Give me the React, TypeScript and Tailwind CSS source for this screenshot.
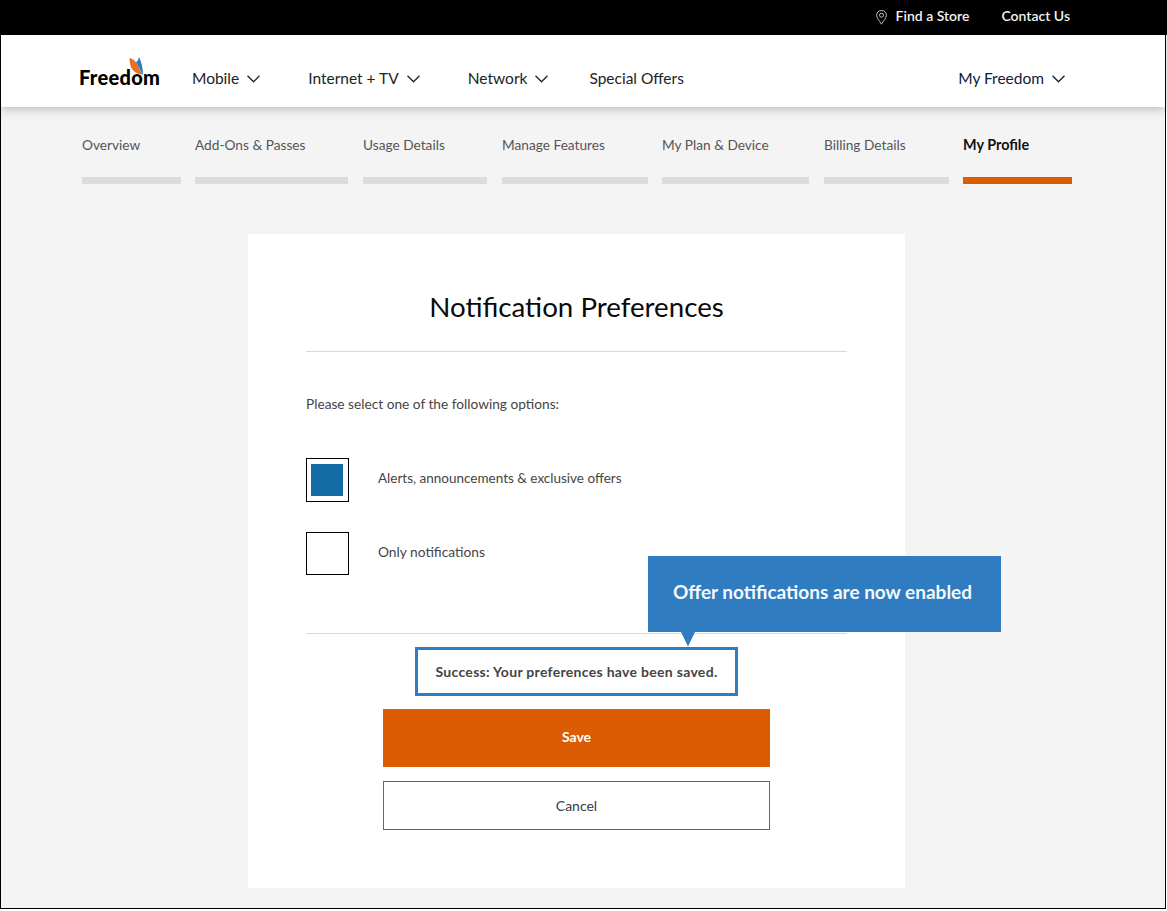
const tabs = [
  { label: "Overview", width: "w-[99px] mr-[14px]" },
  { label: "Add-Ons & Passes", width: "w-[153px] mr-[15px]" },
  { label: "Usage Details", width: "w-[124px] mr-[15px]" },
  { label: "Manage Features", width: "w-[146px] mr-[14px]" },
  { label: "My Plan & Device", width: "w-[147px] mr-[15px]" },
  { label: "Billing Details", width: "w-[125px] mr-[14px]" },
];

function Chevron() {
  return (
    <svg width="13" height="8" viewBox="0 0 13 8" fill="none" stroke="currentColor" strokeWidth="1.3">
      <path d="M0.5 0.8 L6.5 6.8 L12.5 0.8" />
    </svg>
  );
}

function NavItem({ label, className }: { label: string; className: string }) {
  return (
    <a className={`flex items-center gap-[8px] text-[15.5px] ${className}`}>
      {label}
      <Chevron />
    </a>
  );
}

function Logo() {
  return (
    <div className="relative w-[81px] h-[28px] mt-[-14px]">
      <svg className="absolute left-[49px] top-[-1px]" width="15" height="18" viewBox="0 0 15 18">
        <path d="M0.5 1 C5 2 8 5 13 17.5 C6 16.5 0.5 13 0.5 1 Z" fill="#e8701f" />
        <path d="M10 0 C12.5 5 14 11 14 17.5 L13 17.5 C11.5 13 9.5 9 7 5.5 C8.5 4 9.5 2.5 10 0 Z" fill="#2f7dc1" />
      </svg>
      <span className="absolute left-[-1px] bottom-[-3px] text-[20px] font-black leading-[24px] tracking-[0.3px] text-black">
        Freedom
      </span>
    </div>
  );
}

export default function App() {
  return (
    <div className="w-[1167px] h-[911px] overflow-hidden bg-white font-['Lato',sans-serif]">
      <div className="relative h-[35px] bg-black flex justify-end items-center pr-[97px] pb-[4px] text-[14px] font-semibold text-[#f2f2f2]">
        <svg className="mr-[9px] mt-[3px]" width="11" height="15" viewBox="0 0 11 15" fill="none" stroke="#d0d0d0" strokeWidth="0.9">
          <path d="M5.5 14.2 C3.5 10.8 0.6 8 0.6 5.2 C0.6 2.5 2.8 0.5 5.5 0.5 C8.2 0.5 10.4 2.5 10.4 5.2 C10.4 8 7.5 10.8 5.5 14.2 Z" />
          <circle cx="5.5" cy="5.2" r="2" />
        </svg>
        <span>Find a Store</span>
        <span className="ml-[32px]">Contact Us</span>
      </div>

      <div className="relative w-[1166px] h-[874px] bg-[#f4f4f4] border-x border-b border-black">
        <header className="h-[72px] bg-white shadow-[0_2px_10px_rgba(0,0,0,0.25)] flex items-center pt-[16px] pl-[79px] pr-[100px] text-[#222]">
          <Logo />
          <NavItem label="Mobile" className="ml-[31px]" />
          <NavItem label="Internet + TV" className="ml-[48px]" />
          <NavItem label="Network" className="ml-[48px]" />
          <a className="ml-[41px] text-[15.5px]">Special Offers</a>
          <NavItem label="My Freedom" className="ml-auto text-[#10203a]" />
        </header>

        <nav className="flex pl-[81px] pt-[28px]">
          {tabs.map((tab) => (
            <div key={tab.label} className={tab.width}>
              <div className="h-[20px] text-[13.7px] leading-[20px] text-[#555]">{tab.label}</div>
              <div className="mt-[22px] h-[7px] bg-[#dcdcdc]" />
            </div>
          ))}
          <div className="w-[109px]">
            <div className="h-[20px] text-[14.4px] leading-[20px] font-bold text-[#111]">My Profile</div>
            <div className="mt-[22px] h-[7px] bg-[#dc5c05]" />
          </div>
        </nav>

        <main className="mt-[50px] ml-[247px] w-[657px] h-[654px] bg-white px-[58px] pt-[54px]">
          <h1 className="text-center text-[27.7px] leading-[38px] text-[#0a0a0a]">Notification Preferences</h1>
          <div className="mt-[25px] h-px bg-[#d9d9d9]" />
          <p className="mt-[43px] mb-[45px] text-[13.7px] leading-[18px] text-[#444]">
            Please select one of the following options:
          </p>

          <div className="flex items-center gap-[29px]">
            <div className="w-[43px] h-[44px] border border-black flex items-center justify-center">
              <div className="w-[32px] h-[32px] bg-[#126ba5] mr-[1px]" />
            </div>
            <span className="mb-[4px] text-[13.5px] text-[#444]">Alerts, announcements & exclusive offers</span>
          </div>
          <div className="mt-[30px] flex items-center gap-[29px]">
            <div className="w-[43px] h-[43px] border border-black" />
            <span className="mb-[2px] text-[13.75px] text-[#444]">Only notifications</span>
          </div>

          <div className="mt-[58px] h-px bg-[#d9d9d9]" />

          <div className="mt-[13px] mx-auto w-[323px] h-[49px] border-[3px] border-[#2f7cc0] flex items-center justify-center text-[14px] tracking-[0.3px] font-bold text-[#444]">
            Success: Your preferences have been saved.
          </div>
          <button className="mt-[13px] mx-[77px] block w-[387px] h-[58px] pb-[4px] bg-[#dc5c05] text-[14px] font-bold text-white">
            Save
          </button>
          <button className="mt-[14px] mx-[77px] block w-[387px] h-[49px] bg-white border border-[#666] text-[14px] text-[#333a4d]">
            Cancel
          </button>
        </main>

        <div className="absolute left-[647px] top-[521px] w-[353px] h-[76px] bg-[#2f7cc0] pt-[24px] pr-[4px] text-center text-[19px] leading-[24px] font-bold text-[#f5f9fc]">
          Offer notifications are now enabled
          <svg className="absolute left-[33px] top-[76px]" width="14" height="15" viewBox="0 0 14 15">
            <path d="M0 0 L14 0 L7 14.5 Z" fill="#2f7cc0" />
          </svg>
        </div>
      </div>
    </div>
  );
}
